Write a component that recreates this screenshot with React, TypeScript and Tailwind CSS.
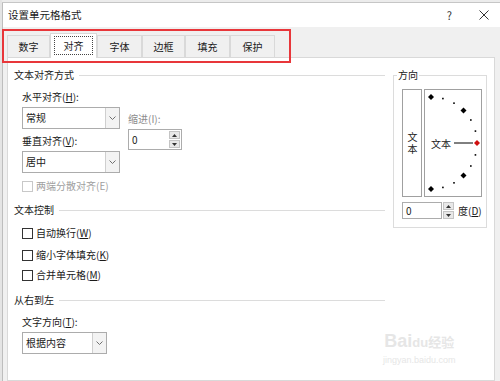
import type { ReactNode } from "react";

const tabs = [
  { label: "数字", w: "w-[43px]" },
  { label: "对齐", w: "w-[47px]", active: true },
  { label: "字体", w: "w-[45px]" },
  { label: "边框", w: "w-[43px]" },
  { label: "填充", w: "w-[45px]" },
  { label: "保护", w: "w-[45px]" },
];

function SectionHeader({ children, className = "" }: { children: ReactNode; className?: string }) {
  return (
    <div className={`flex h-[12px] items-center ${className}`}>
      <span className="leading-[12px]">{children}</span>
      <div className="ml-[5px] h-px flex-1 bg-[#dcdcdc]" />
    </div>
  );
}

function Select({ value, className = "" }: { value: string; className?: string }) {
  return (
    <div className={`flex h-[22px] border border-[#acacac] bg-white ${className}`}>
      <span className="flex-1 pl-[3px] leading-[20px]">{value}</span>
      <span className="flex w-[14px] items-center justify-center border-l border-[#cfcfcf] bg-[#f3f3f3]">
        <svg width="7" height="4" viewBox="0 0 7 4">
          <path d="M0.5 0.5L3.5 3.5L6.5 0.5" stroke="#707070" fill="none" />
        </svg>
      </span>
    </div>
  );
}

function Arrows() {
  return (
    <div className="flex w-[11px] flex-col gap-px">
      <span className="flex flex-1 items-center justify-center border border-[#c4c4c4] bg-[#e8e8e8]">
        <svg width="5" height="3" viewBox="0 0 5 3">
          <path d="M0 3L2.5 0L5 3Z" fill="#333" />
        </svg>
      </span>
      <span className="flex flex-1 items-center justify-center border border-[#c4c4c4] bg-[#e8e8e8]">
        <svg width="5" height="3" viewBox="0 0 5 3">
          <path d="M0 0L2.5 3L5 0Z" fill="#333" />
        </svg>
      </span>
    </div>
  );
}

function Checkbox({ label, disabled, className = "" }: { label: ReactNode; disabled?: boolean; className?: string }) {
  return (
    <div className={`flex h-[12px] items-center gap-[3px] pl-[8px] ${className}`}>
      <span
        className={`size-[11px] border bg-white ${disabled ? "border-[#c8c8c8]" : "border-[#333]"}`}
      />
      <span className={`leading-[12px] ${disabled ? "text-[#a0a0a0]" : ""}`}>{label}</span>
    </div>
  );
}

function Dial() {
  const cx = 6;
  const cy = 53;
  const r = 46;
  const pts = [90, 75, 60, 45, 30, 15, 0, -15, -30, -45, -60, -75, -90].map((a) => {
    const t = (a * Math.PI) / 180;
    return { a, x: cx + r * Math.cos(t), y: cy - r * Math.sin(t) };
  });
  return (
    <svg width="56" height="106" viewBox="0 0 56 106">
      {pts.map((p) =>
        p.a % 45 === 0 ? (
          <polygon
            key={p.a}
            points={`${p.x},${p.y - 3} ${p.x + 3},${p.y} ${p.x},${p.y + 3} ${p.x - 3},${p.y}`}
            fill={p.a === 0 ? "#d01010" : "#000"}
          />
        ) : (
          <rect key={p.a} x={p.x - 0.8} y={p.y - 0.8} width="1.6" height="1.6" fill="#000" />
        ),
      )}
      <line x1="29" y1="53" x2="48" y2="53" stroke="#000" strokeWidth="1" />
      <text x="6" y="57.5" fontSize="10" fill="#222" fontFamily="Noto Sans CJK SC, sans-serif">
        文本
      </text>
    </svg>
  );
}

export default function App() {
  return (
    <div className="relative flex h-[381px] w-[500px] flex-col overflow-hidden bg-[#e4e4e4] pl-[2px] font-['Noto_Sans_CJK_SC','Microsoft_YaHei',sans-serif] text-[10px] text-[#1a1a1a]">
      <div className="h-[3px] border-b border-[#c6c6c6] bg-[#ececec]" />
      <div className="flex flex-1 flex-col border-l border-[#bdbdbd] bg-[#f0f0f0]">
        <div className="flex h-[24px] items-center bg-white pl-[5px] pr-[11px]">
          <span className="text-[10.5px] leading-[12px]">设置单元格格式</span>
          <span className="ml-auto text-[11px] leading-[12px] text-[#333]">?</span>
          <svg className="ml-[27px]" width="10" height="10" viewBox="0 0 10 10">
            <path d="M0.5 0.5L9.5 9.5M9.5 0.5L0.5 9.5" stroke="#333" strokeWidth="1" />
          </svg>
        </div>

        <div className="mt-[6px] flex h-[25px] items-end pl-[4px]">
          {tabs.map((t) =>
            t.active ? (
              <div
                key={t.label}
                className={`relative z-10 flex h-[25px] border border-b-0 border-[#d9d9d9] bg-white px-[3px] pb-[3px] pt-[2px] ${t.w}`}
              >
                <span className="flex flex-1 items-center justify-center border border-dotted border-[#444] leading-[12px]">
                  {t.label}
                </span>
              </div>
            ) : (
              <div
                key={t.label}
                className={`mb-px flex h-[22px] items-center justify-center border border-b-0 border-[#d9d9d9] bg-[#f0f0f0] leading-[12px] ${t.w}`}
              >
                {t.label}
              </div>
            ),
          )}
        </div>

        <div className="-mt-px ml-[4px] mr-[5px] flex flex-1 border border-[#d9d9d9] bg-white">
          <div className="ml-[6px] w-[371px] pt-[11px]">
            <SectionHeader>文本对齐方式</SectionHeader>
            <div className="mt-[10px] flex pl-[8px]">
              <div className="w-[98px]">
                <div className="leading-[12px]">
                  水平对齐(<u>H</u>):
                </div>
                <Select className="mt-[4px] w-[98px]" value="常规" />
                <div className="mt-[6px] leading-[12px]">
                  垂直对齐(<u>V</u>):
                </div>
                <Select className="mt-[4px] w-[98px]" value="居中" />
              </div>
              <div className="ml-[8px] pt-[22px]">
                <div className="leading-[12px] text-[#8c8c8c]">缩进(I):</div>
                <div className="mt-[4px] flex h-[21px] w-[54px] border border-[#acacac] bg-white p-px">
                  <span className="flex-1 pl-[2px] leading-[17px]">0</span>
                  <Arrows />
                </div>
              </div>
            </div>
            <Checkbox className="mt-[7px]" disabled label="两端分散对齐(E)" />

            <SectionHeader className="mt-[12px]">文本控制</SectionHeader>
            <Checkbox
              className="mt-[11px]"
              label={
                <>
                  自动换行(<u>W</u>)
                </>
              }
            />
            <Checkbox
              className="mt-[10px]"
              label={
                <>
                  缩小字体填充(<u>K</u>)
                </>
              }
            />
            <Checkbox
              className="mt-[8px]"
              label={
                <>
                  合并单元格(<u>M</u>)
                </>
              }
            />

            <SectionHeader className="mt-[13px]">从右到左</SectionHeader>
            <div className="mt-[10px] pl-[8px] leading-[12px]">
              文字方向(<u>T</u>):
            </div>
            <div className="pl-[8px]">
              <Select className="mt-[4px] w-[85px]" value="根据内容" />
            </div>
          </div>

          <fieldset className="ml-[8px] mt-[11px] h-[159px] w-[94px] border border-[#dcdcdc] pl-[8px] pt-[8px]">
            <legend className="ml-[-5px] px-px leading-[12px]">方向</legend>
            <div className="flex gap-[2px]">
              <div className="flex h-[108px] w-[20px] items-center justify-center border border-[#a0a0a0] pt-[2px]">
                <span className="leading-[12px] tracking-[2px] [text-orientation:upright] [writing-mode:vertical-rl]">
                  文本
                </span>
              </div>
              <div className="h-[108px] w-[58px] border border-[#a0a0a0]">
                <Dial />
              </div>
            </div>
            <div className="mt-[5px] flex h-[17px] items-center">
              <div className="h-[17px] w-[40px] border border-[#acacac] bg-white pl-[3px] leading-[15px]">0</div>
              <div className="ml-px flex h-[17px]">
                <Arrows />
              </div>
              <span className="ml-[4px] leading-[12px]">
                度(<u>D</u>)
              </span>
            </div>
          </fieldset>
        </div>
      </div>

      <div className="pointer-events-none absolute left-[2px] top-[29px] h-[34px] w-[289px] border-2 border-[#e8363a]" />

      <div className="pointer-events-none absolute left-[383px] top-[330px] flex flex-col items-center text-[#e6e6e6]">
        <span className="font-['Liberation_Sans',sans-serif] text-[18px] font-bold leading-[22px]">
          Bai<span className="text-[13px]">du</span>
          <span className="font-['Noto_Sans_CJK_SC',sans-serif] text-[13px]">经验</span>
        </span>
        <span className="font-['Liberation_Sans',sans-serif] text-[9px] leading-[12px]">jingyan.baidu.com</span>
      </div>
    </div>
  );
}
